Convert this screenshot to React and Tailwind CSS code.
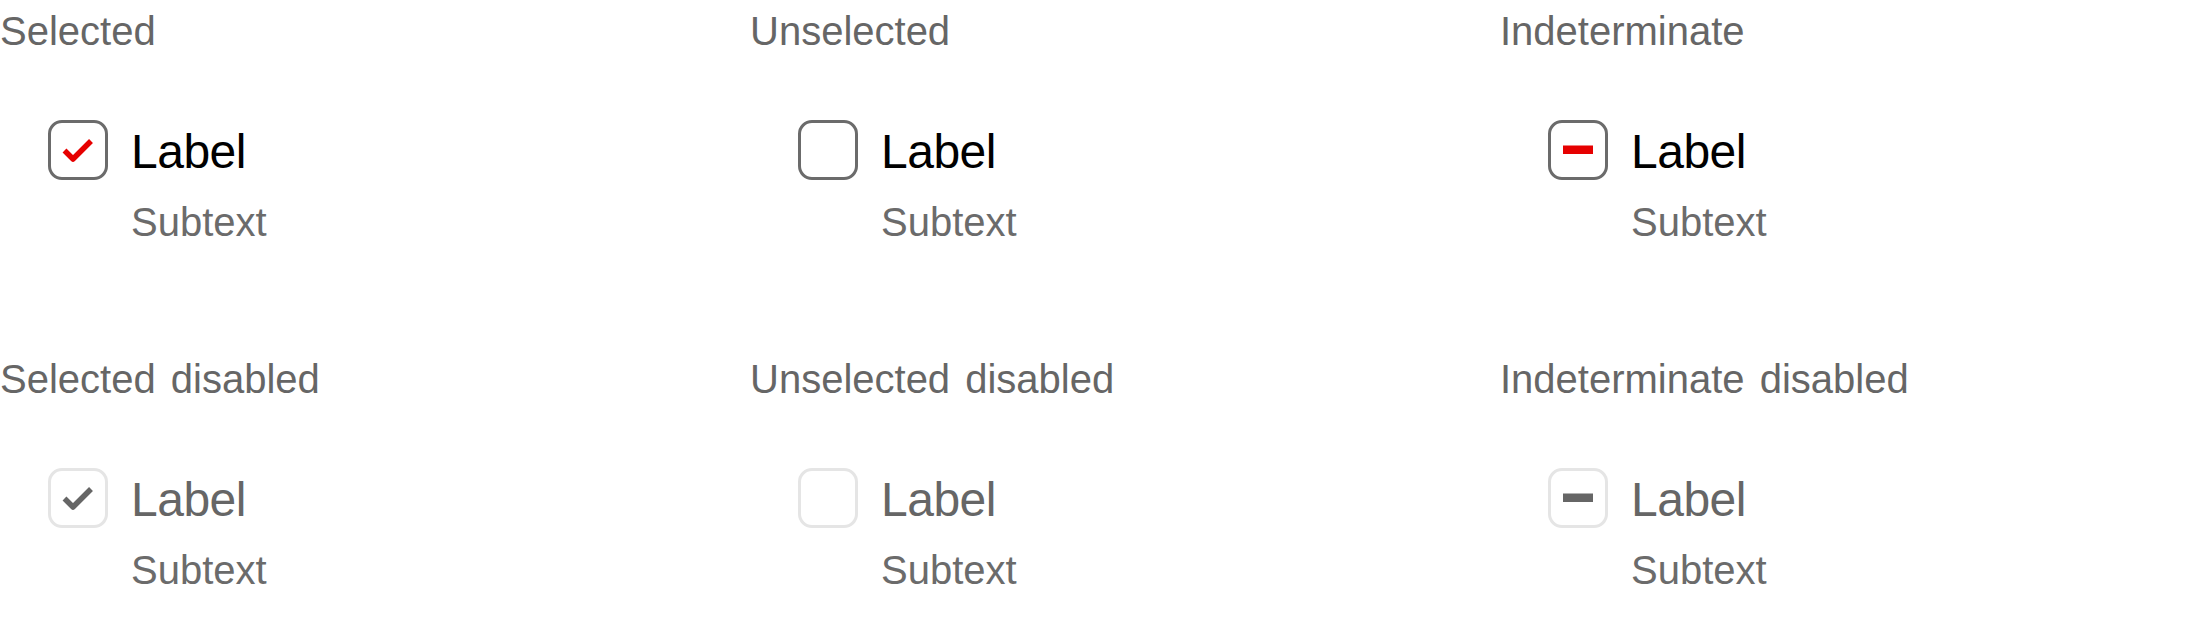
import React from "react";

function Box({ state, disabled }) {
  const border = disabled ? "border-[#e5e5e5]" : "border-[#6b6b6b]";
  const mark = disabled ? "#666666" : "#e60000";
  return (
    <div className={`relative w-[60px] h-[60px] shrink-0 rounded-[14px] border-[3px] bg-white ${border}`}>
      {state === "checked" && (
        <svg className="absolute left-[-3px] top-[-3px]" width="60" height="60" viewBox="0 0 60 60">
          <polyline points="16.5,30.5 25,39 43,21" fill="none" stroke={mark} strokeWidth="5.5" strokeLinejoin="round" strokeLinecap="butt" />
        </svg>
      )}
      {state === "indeterminate" && (
        <svg className="absolute left-[-3px] top-[-3px]" width="60" height="60" viewBox="0 0 60 60">
          <rect x="15" y="25.5" width="30" height="8.5" fill={mark} />
        </svg>
      )}
    </div>
  );
}

function Cell({ title, state, disabled }) {
  return (
    <div className="flex flex-col">
      <div className="text-[40px] leading-[48px] text-[#666666] whitespace-nowrap [word-spacing:4px]">{title}</div>
      <div className="mt-[65px] ml-12 flex gap-[23px]">
        <Box state={state} disabled={disabled} />
        <div className="flex flex-col">
          <div className={`text-[48px] leading-[64px] tracking-[-0.5px] ${disabled ? "text-[#666666]" : "text-black"}`}>Label</div>
          <div className="mt-[14px] text-[40px] leading-[48px] text-[#6b6b6b]">Subtext</div>
        </div>
      </div>
    </div>
  );
}

export default function App() {
  return (
    <div
      className="w-[2190px] h-[636px] bg-white overflow-hidden pt-[7px]"
      style={{ fontFamily: '"Liberation Sans", Arial, sans-serif' }}
    >
      <div className="grid grid-cols-[750px_750px_1fr] gap-y-[109px]">
        <Cell title="Selected" state="checked" />
        <Cell title="Unselected" state="none" />
        <Cell title="Indeterminate" state="indeterminate" />
        <Cell title="Selected disabled" state="checked" disabled />
        <Cell title="Unselected disabled" state="none" disabled />
        <Cell title="Indeterminate disabled" state="indeterminate" disabled />
      </div>
    </div>
  );
}
